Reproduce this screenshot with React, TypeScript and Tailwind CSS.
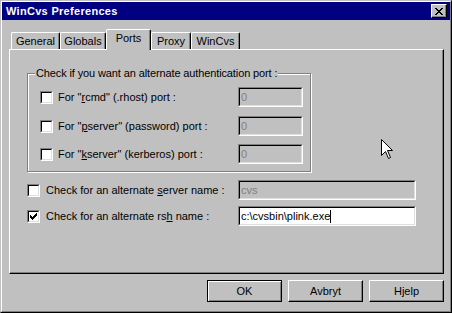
import React from 'react';

// Raised / sunken bevels, Win9x style
const sunken =
  'border border-t-[#808080] border-l-[#808080] border-r-white border-b-white';
const sunkenInner =
  'border border-t-black border-l-black border-r-[#dfdfdf] border-b-[#dfdfdf]';

function Checkbox({ checked }: { checked?: boolean }) {
  return (
    <div className={`w-[13px] h-[13px] shrink-0 ${sunken}`}>
      <div className={`w-full h-full bg-white ${sunkenInner}`}>
        {checked && (
          <svg width="9" height="9" viewBox="0 0 9 9" shapeRendering="crispEdges" className="block">
            <rect x="7" y="1" width="1" height="3" fill="black" />
            <rect x="6" y="2" width="1" height="3" fill="black" />
            <rect x="5" y="3" width="1" height="3" fill="black" />
            <rect x="4" y="4" width="1" height="3" fill="black" />
            <rect x="3" y="5" width="1" height="3" fill="black" />
            <rect x="2" y="4" width="1" height="3" fill="black" />
            <rect x="1" y="3" width="1" height="3" fill="black" />
          </svg>
        )}
      </div>
    </div>
  );
}

function TextBox({ value, disabled, width }: { value: string; disabled?: boolean; width: string }) {
  return (
    <div className={`${width} h-[20px] shrink-0 ${sunken}`}>
      <div
        className={`w-full h-full ${sunkenInner} flex items-center pl-[1px] ${
          disabled ? 'bg-[#c0c0c0] text-[#808080]' : 'bg-white text-black'
        }`}
      >
        <span>{value}</span>
        {!disabled && <span className="w-px h-[13px] bg-black" />}
      </div>
    </div>
  );
}

function Label({ pre, u, post }: { pre: string; u: string; post: string }) {
  return (
    <span>
      {pre}
      <span className="underline underline-offset-[1px]">{u}</span>
      {post}
    </span>
  );
}

function Tab({ label, width, active }: { label: string; width: string; active?: boolean }) {
  if (active) {
    return (
      <div
        className={`${width} h-[21px] -mb-px relative z-10 bg-[#c0c0c0] rounded-t-[2px] border-t border-l border-r border-t-white border-l-white border-r-black shadow-[inset_-1px_0_0_#808080] flex justify-center pt-[2px]`}
      >
        {label}
      </div>
    );
  }
  return (
    <div
      className={`${width} h-[17px] rounded-t-[2px] border-t border-l border-r border-t-white border-l-white border-r-black shadow-[inset_-1px_0_0_#808080] flex justify-center pt-[2px]`}
    >
      {label}
    </div>
  );
}

function Button({ label, isDefault }: { label: string; isDefault?: boolean }) {
  return (
    <div
      className={`w-[75px] h-[22px] flex items-center justify-center ${
        isDefault
          ? 'border border-black shadow-[inset_1px_1px_0_white,inset_-1px_-1px_0_#808080]'
          : 'border border-t-white border-l-white border-r-black border-b-black shadow-[inset_-1px_-1px_0_#808080]'
      }`}
    >
      {label}
    </div>
  );
}

export default function App() {
  return (
    <div
      className="w-[452px] h-[313px] bg-[#c0c0c0] text-[11px] leading-[13px] text-black border border-t-[#c0c0c0] border-l-[#c0c0c0] border-r-black border-b-black"
      style={{ fontFamily: '"Liberation Sans", Arial, sans-serif' }}
    >
      <div className="w-full h-full flex flex-col border border-t-white border-l-white border-r-[#808080] border-b-[#808080]">
        {/* Title bar */}
        <div className="h-[18px] bg-[#000080] flex items-center justify-between pl-[4px] pr-[3px]">
          <span className="text-white font-bold tracking-[0.3px]">WinCvs Preferences</span>
          <div className="w-[16px] h-[14px] bg-[#c0c0c0] border border-t-white border-l-white border-r-black border-b-black shadow-[inset_-1px_-1px_0_#808080] flex items-center justify-center">
            <svg width="8" height="7" viewBox="0 0 8 7" shapeRendering="crispEdges" className="block">
              <path d="M0 0h2v1h-2zM6 0h2v1h-2zM1 1h2v1h-2zM5 1h2v1h-2zM2 2h4v1h-4zM3 3h2v1h-2zM2 4h4v1h-4zM1 5h2v1h-2zM5 5h2v1h-2zM0 6h2v1h-2zM6 6h2v1h-2z" fill="black" />
            </svg>
          </div>
        </div>

        {/* Body */}
        <div className="flex flex-col pl-[7px] pr-[6px] pt-[9px]">
          {/* Tabs */}
          <div className="flex items-end pl-[2px] h-[20px]">
            <Tab label="General" width="w-[49px]" />
            <Tab label="Globals" width="w-[46px]" />
            <Tab label="Ports" width="w-[45px]" active />
            <Tab label="Proxy" width="w-[40px]" />
            <Tab label="WinCvs" width="w-[49px]" />
          </div>

          {/* Tab panel */}
          <div className="relative h-[225px] border border-t-white border-l-white border-r-black border-b-black shadow-[inset_-1px_-1px_0_#808080] pl-[17px] pt-[23px]">
            {/* Group box */}
            <div className="relative w-[284px] h-[99px] border border-[#808080] shadow-[1px_1px_0_white,inset_1px_1px_0_white] pl-[12px] pt-[13px] flex flex-col gap-[9px]">
              <span className="absolute top-[-7px] left-[7px] px-[1px] bg-[#c0c0c0] tracking-[-0.12px]">
                Check if you want an alternate authentication port :
              </span>
              <div className="flex items-center h-[20px]">
                <Checkbox />
                <div className="w-[185px] pl-[5px]">
                  <Label pre={'For "'} u="r" post={'cmd" (.rhost) port :'} />
                </div>
                <TextBox value="0" disabled width="w-[65px]" />
              </div>
              <div className="flex items-center h-[20px]">
                <Checkbox />
                <div className="w-[185px] pl-[5px]">
                  <Label pre={'For "'} u="p" post={'server" (password) port :'} />
                </div>
                <TextBox value="0" disabled width="w-[65px]" />
              </div>
              <div className="flex items-center h-[20px] -mt-px">
                <Checkbox />
                <div className="w-[185px] pl-[5px]">
                  <Label pre={'For "'} u="k" post={'server" (kerberos) port :'} />
                </div>
                <TextBox value="0" disabled width="w-[65px]" />
              </div>
            </div>

            {/* Server / rsh rows */}
            <div className="flex flex-col gap-[6px] mt-[8px]">
              <div className="flex items-center h-[20px]">
                <Checkbox />
                <div className="w-[198px] pl-[6px]">
                  <Label pre="Check for an alternate " u="s" post="erver name :" />
                </div>
                <TextBox value="cvs" disabled width="w-[178px]" />
              </div>
              <div className="flex items-center h-[20px]">
                <Checkbox checked />
                <div className="w-[198px] pl-[6px]">
                  <Label pre="Check for an alternate rs" u="h" post=" name :" />
                </div>
                <TextBox value={'c:\\cvsbin\\plink.exe'} width="w-[178px]" />
              </div>
            </div>

            {/* Mouse pointer */}
            <svg
              width="12"
              height="20"
              viewBox="0 0 12 20"
              className="absolute left-[371px] top-[89px]"
            >
              <path
                d="M0.5 0.5 L0.5 16.5 L4.5 12.5 L7.5 19.5 L9.5 18.5 L6.5 11.5 L11.5 11.5 Z"
                fill="white"
                stroke="black"
                strokeWidth="1"
              />
            </svg>
          </div>

          {/* Buttons */}
          <div className="flex justify-end gap-[6px] mt-[6px]">
            <Button label="OK" isDefault />
            <Button label="Avbryt" />
            <Button label="Hjelp" />
          </div>
        </div>
      </div>
    </div>
  );
}
